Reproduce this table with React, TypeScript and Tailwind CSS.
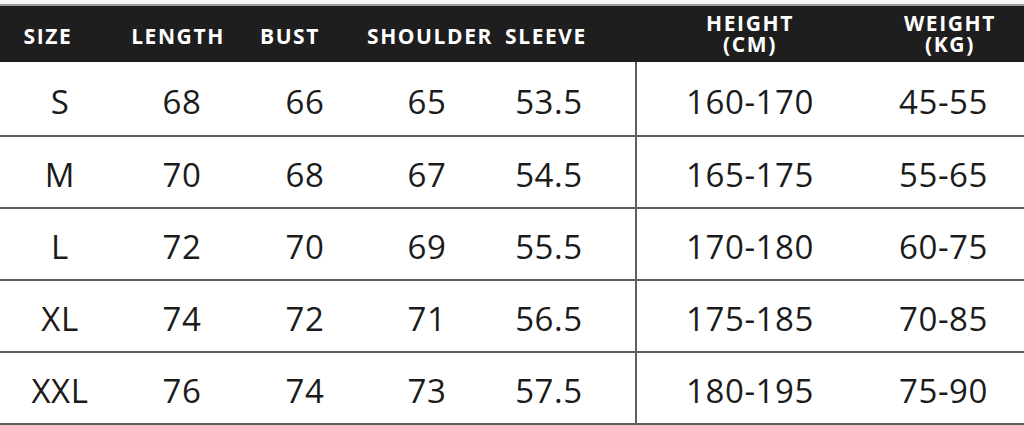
const rows = [
  ["S", "68", "66", "65", "53.5", "160-170", "45-55"],
  ["M", "70", "68", "67", "54.5", "165-175", "55-65"],
  ["L", "72", "70", "69", "55.5", "170-180", "60-75"],
  ["XL", "74", "72", "71", "56.5", "175-185", "70-85"],
  ["XXL", "76", "74", "73", "57.5", "180-195", "75-90"],
]

const leftWidths = ["w-[120px]", "w-[124px]", "w-[122px]", "w-[122px]", "w-[122px]"]

export default function App() {
  return (
    <div
      className="w-[1024px] h-[425px] overflow-hidden bg-white text-[#1b1b1b]"
      style={{ fontFamily: '"Open Sans", "Noto Sans", sans-serif' }}
    >
      <div className="h-[6px] bg-[#f4f4f4] border-b-2 border-[#9a9a9a]"></div>

      {/* header */}
      <div className="h-[56px] bg-[#1e1e1e] text-white font-bold text-[21px] tracking-[1.6px] flex items-center leading-[22px] pt-[4px]">
        <div className="w-[120px] flex justify-center pr-6">SIZE</div>
        <div className="w-[124px] flex justify-center pr-2">LENGTH</div>
        <div className="w-[122px] flex justify-center pr-[30px]">BUST</div>
        <div className="w-[122px] flex justify-center pl-[6px] whitespace-nowrap">SHOULDER</div>
        <div className="w-[122px] flex justify-center pr-[6px]">SLEEVE</div>
        <div className="w-[25px]"></div>
        <div className="w-[228px] flex justify-center pl-[2px] pb-[4px]">
          <p className="text-center leading-[21px]">
            HEIGHT
            <br />
            (CM)
          </p>
        </div>
        <div className="flex-1 flex justify-center pl-[13px] pb-[4px]">
          <p className="text-center leading-[21px]">
            WEIGHT
            <br />
            (KG)
          </p>
        </div>
      </div>

      {rows.map((r, i) => (
        <div
          key={i}
          className={`flex items-stretch text-[33px] tracking-[0.6px] border-b-2 border-[#5e5e5e] ${i === 0 ? "h-[75px]" : "h-[72px]"}`}
        >
          <div className="w-[635px] flex items-center pt-[6px]">
            {r.slice(0, 5).map((c, j) => (
              <div key={j} className={`${leftWidths[j]} flex justify-center`}>
                {c}
              </div>
            ))}
          </div>
          <div className="flex-1 flex items-center pt-[6px] border-l-2 border-[#5e5e5e]">
            <div className="w-[226px] flex justify-center">{r[5]}</div>
            <div className="flex-1 flex justify-center">{r[6]}</div>
          </div>
        </div>
      ))}
    </div>
  )
}
